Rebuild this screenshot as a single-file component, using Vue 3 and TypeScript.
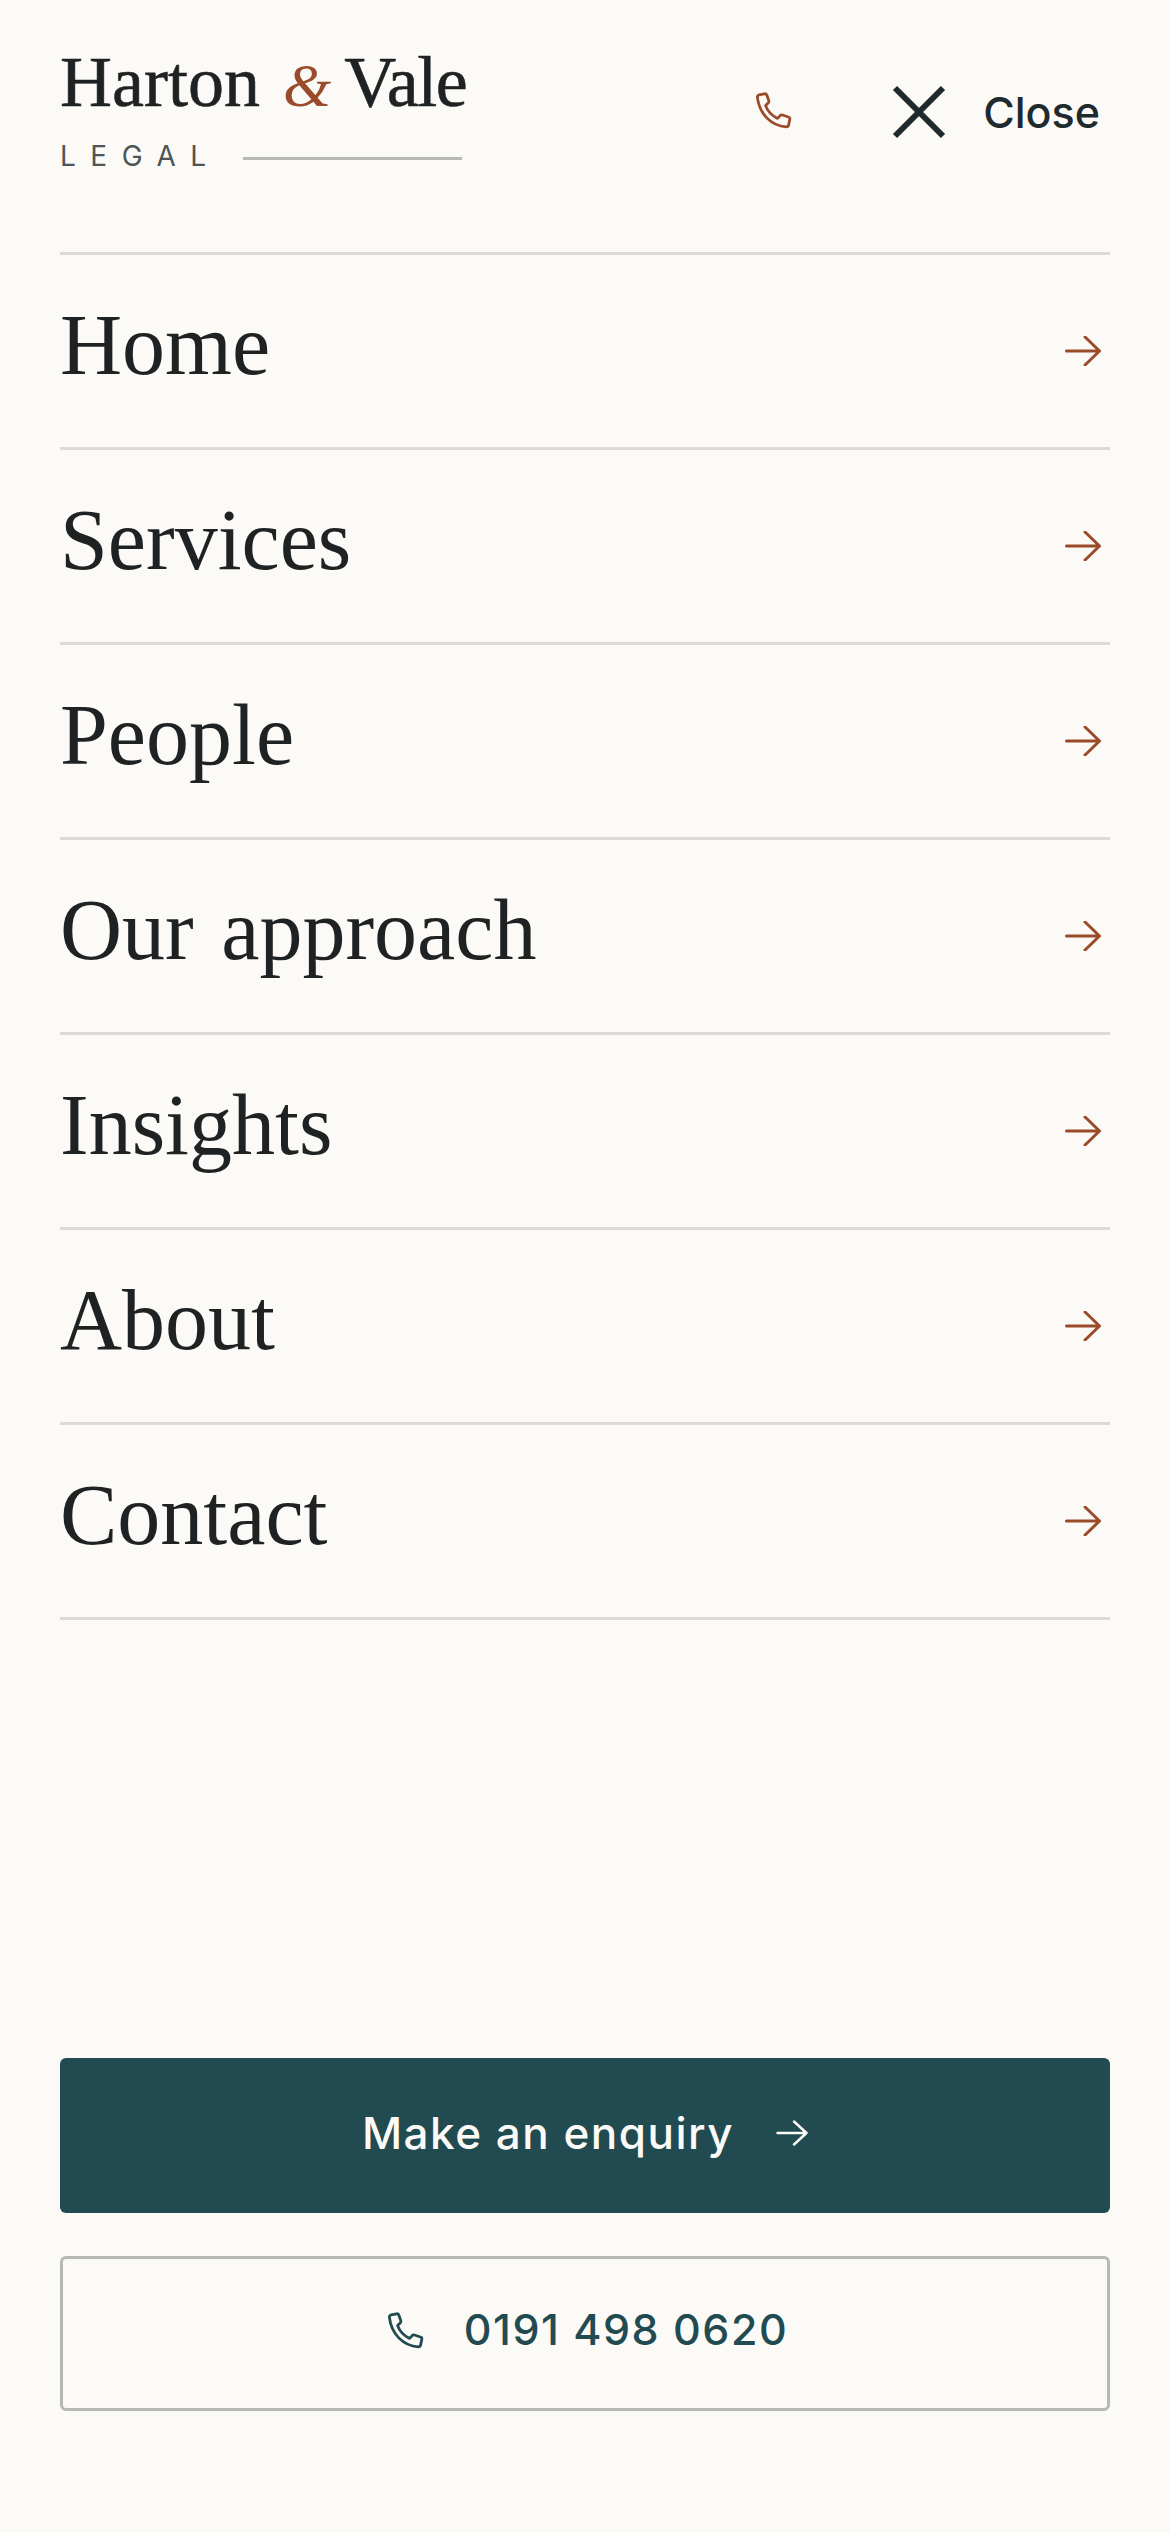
<script setup lang="ts">
const links = ['Home', 'Services', 'People', 'Our approach', 'Insights', 'About', 'Contact']
const phonePath = 'M4.6 3.4 7.3 2.900c.5-.1.900.2 1.100.6l1 2.900c.1.400 0 .8-.3 1.100L7.800 8.800c1 2.800 3.100 5 6 6.400l1.300-1.400c.3-.3.700-.4 1.100-.3l3 1c.5.100.8.600.7 1.100l-.6 2.900c-.1.600-.6.900-1.200.9C10.400 18.900 4.700 12.900 3.700 4.700c-.1-.6.300-1.200.9-1.300Z'
</script>

<template>
  <div class="menu">
    <header class="top">
      <div class="logo">
        <div class="logo-name">Harton <span class="amp">&amp;</span> <span class="vale">Vale</span></div>
        <div class="logo-sub">
          <span>LEGAL</span>
          <i class="logo-line"></i>
        </div>
      </div>
      <div class="top-actions">
        <button type="button" class="phone-btn">
          <svg width="48" height="48" viewBox="0 0 24 24" fill="none" stroke="currentColor" stroke-width="1.400" stroke-linejoin="round"><path :d="phonePath"/></svg>
        </button>
        <button type="button" class="close-btn">
          <svg width="54" height="54" viewBox="0 0 54 54" fill="none" stroke="currentColor" stroke-width="6"><line x1="3" y1="3" x2="51" y2="51"/><line x1="51" y1="3" x2="3" y2="51"/></svg>
          <span>Close</span>
        </button>
      </div>
    </header>

    <nav class="links">
      <a v-for="link in links" :key="link" class="link" href="#">
        <span class="link-text">{{ link }}</span>
        <svg class="arrow" width="36" height="30" viewBox="0 0 36 30" fill="none" stroke="currentColor" stroke-width="3" stroke-linecap="round" stroke-linejoin="round"><path d="M1.500 15h33M20 1 34.500 15 20 29"/></svg>
      </a>
    </nav>

    <div class="actions">
      <a class="btn btn-primary" href="#">
        <span>Make an enquiry</span>
        <svg width="32" height="26" viewBox="0 0 32 26" fill="none" stroke="currentColor" stroke-width="2.500" stroke-linecap="round" stroke-linejoin="round"><path d="M1.500 13h29M18 1.500 30.500 13 18 24.500"/></svg>
      </a>
      <a class="btn btn-outline" href="#">
        <svg width="48" height="48" viewBox="0 0 24 24" fill="none" stroke="currentColor" stroke-width="1.400" stroke-linejoin="round"><path :d="phonePath"/></svg>
        <span class="btn-number">0191 498 0620</span>
      </a>
    </div>
  </div>
</template>

<style>
body { background: #fbfaf7; }
</style>

<style scoped>
.menu {
  display: flex;
  flex-direction: column;
  min-height: 2532px;
  box-sizing: border-box;
  padding: 0 60px 121px;
  background: #fbfaf7;
  color: #1f2222;
  font-family: "Liberation Serif", serif;
}
.top {
  display: flex;
  justify-content: space-between;
  height: 252px;
  box-sizing: border-box;
  padding-top: 44px;
}
.logo { width: 402px; }
.logo-name {
  font-size: 72px;
  line-height: 76px;
  white-space: nowrap;
  -webkit-text-stroke: 0.6px #1f2222;
}
.amp { margin: 0 -5px 0 5px; color: #9a4b2a; font-size: 62px; font-style: italic; -webkit-text-stroke: 0; }
.vale { letter-spacing: -1.500px; }
.logo-sub { display: flex; align-items: center; gap: 22px; margin-top: 19px; }
.logo-sub span {
  font-family: Inter, sans-serif;
  font-size: 28px;
  line-height: 28px;
  letter-spacing: 14.500px;
  color: #4e5556;
}
.logo-line { flex: 1; height: 3px; margin-top: 4px; background: #b8b8b3; }
.top-actions { display: flex; align-items: center; height: 54px; margin-top: 41px; padding-right: 10px; }
button {
  display: flex;
  align-items: center;
  padding: 0;
  border: 0;
  background: none;
  color: inherit;
  font: inherit;
}
.phone-btn { color: #9a4b2a; margin-right: 94px; }
.close-btn { gap: 37px; color: #1f2a2e; font-family: Inter, sans-serif; font-size: 43px; font-weight: 500; line-height: 54px; }
.links { display: flex; flex-direction: column; border-top: 3px solid #dbdad6; }
.link {
  display: flex;
  align-items: center;
  justify-content: space-between;
  height: 192px;
  padding-right: 9px;
  border-bottom: 3px solid #dbdad6;
  color: inherit;
  font-size: 86px;
  text-decoration: none;
}
.link-text { padding-bottom: 12px; word-spacing: 6px; }
.arrow { color: #9a4b2a; }
.actions { display: flex; flex-direction: column; gap: 43px; margin-top: auto; }
.btn {
  display: flex;
  align-items: center;
  justify-content: center;
  height: 155px;
  box-sizing: border-box;
  border-radius: 6px;
  font-family: Inter, sans-serif;
  font-weight: 500;
  letter-spacing: 1.500px;
  text-decoration: none;
}
.btn-primary { gap: 42px; padding-bottom: 6px; background: #214b51; color: #fbfaf7; font-size: 44px; }
.btn-outline { gap: 34px; padding-bottom: 3px; border: 3px solid #b8b8b3; color: #214b51; font-size: 43px; }
.btn-number { padding-bottom: 6px; }
</style>
